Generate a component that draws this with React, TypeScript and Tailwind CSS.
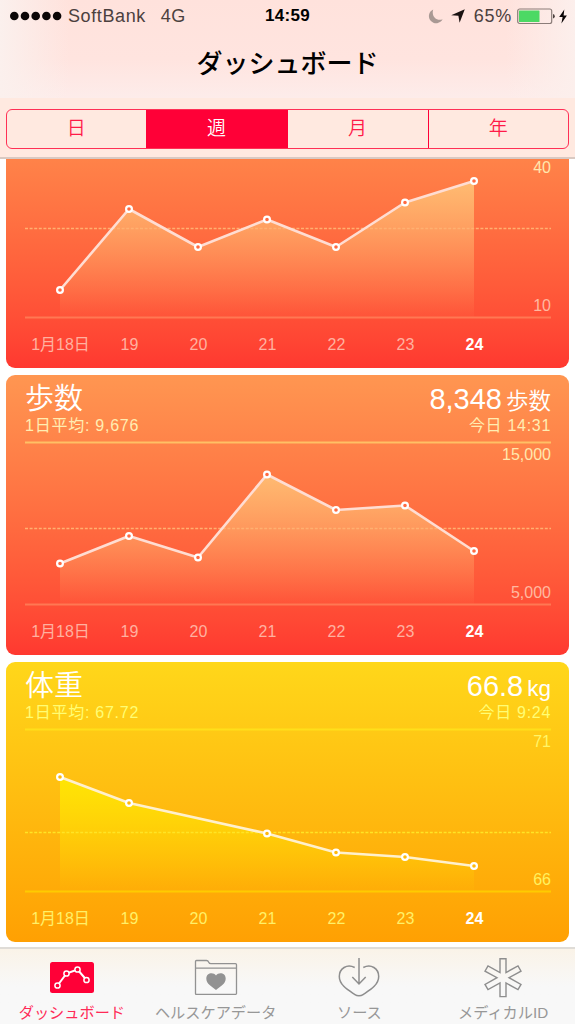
import React from 'react'

interface Point {
  day: number
  y: number
}

interface Metric {
  id: string
  title: string
  average: string
  value: string
  unit: string
  updated: string
  max: string
  min: string
  averageY: number
  points: Point[]
  theme: 'orange' | 'yellow'
}

const DAYS = ['1月18日', '19', '20', '21', '22', '23', '24']

const metrics: Metric[] = [
  {
    id: 'climbed',
    title: '',
    average: '',
    value: '',
    unit: '',
    updated: '',
    max: '40',
    min: '10',
    averageY: 74.5,
    theme: 'orange',
    points: [
      { day: 0, y: 136 },
      { day: 1, y: 55 },
      { day: 2, y: 93 },
      { day: 3, y: 65.5 },
      { day: 4, y: 93 },
      { day: 5, y: 48.5 },
      { day: 6, y: 27 }
    ]
  },
  {
    id: 'steps',
    title: '歩数',
    average: '1日平均: 9,676',
    value: '8,348',
    unit: '歩数',
    updated: '今日 14:31',
    max: '15,000',
    min: '5,000',
    averageY: 87.5,
    theme: 'orange',
    points: [
      { day: 0, y: 122.5 },
      { day: 1, y: 95 },
      { day: 2, y: 116.5 },
      { day: 3, y: 33.5 },
      { day: 4, y: 69 },
      { day: 5, y: 64.5 },
      { day: 6, y: 110 }
    ]
  },
  {
    id: 'weight',
    title: '体重',
    average: '1日平均: 67.72',
    value: '66.8',
    unit: 'kg',
    updated: '今日 9:24',
    max: '71',
    min: '66',
    averageY: 104.5,
    theme: 'yellow',
    points: [
      { day: 0, y: 49 },
      { day: 1, y: 75 },
      { day: 3, y: 105.5 },
      { day: 4, y: 124.5 },
      { day: 5, y: 129 },
      { day: 6, y: 138 }
    ]
  }
]

const themes = {
  orange: {
    card: 'bg-linear-to-b from-[#ff9651] to-[#ff3830]',
    sub: 'text-[#ffedb2]',
    max: 'text-[#ffe7ae]',
    min: 'text-[#ffb9a0]',
    day: 'text-[#ffb1a0]',
    topLine: '#ffc065',
    bottomLine: '#ff7853',
    dash: '#ffb070',
    fill: '#ffd080',
    stroke: '#ffddd2',
    dot: '#ff6a42'
  },
  yellow: {
    card: 'bg-linear-to-b from-[#ffd71a] to-[#ffa003]',
    sub: 'text-[#fffd74]',
    max: 'text-[#fff568]',
    min: 'text-[#fff160]',
    day: 'text-[#fff068]',
    topLine: '#ffdf1a',
    bottomLine: '#ffcb00',
    dash: '#ffe425',
    fill: '#fff200',
    stroke: '#fff0cc',
    dot: '#ffb90c'
  }
}

const dayX = (day: number) => 35 + day * 69

const MetricChart: React.FC<{ metric: Metric }> = ({ metric }) => {
  const theme = themes[metric.theme]
  const line = metric.points.map((p) => `${dayX(p.day)},${p.y}`).join(' ')
  const top = Math.min(...metric.points.map((p) => p.y))

  return (
    <svg width="526" height="165" viewBox="0 0 526 165" className="col-start-1 row-start-1">
      <defs>
        <linearGradient id={`area-${metric.id}`} gradientUnits="userSpaceOnUse" x1="0" y1={top} x2="0" y2="163">
          <stop offset="0" stopColor={theme.fill} stopOpacity="0.75" />
          <stop offset="1" stopColor={theme.fill} stopOpacity="0.03" />
        </linearGradient>
      </defs>
      <polygon points={`35,163 ${line} 449,163`} fill={`url(#area-${metric.id})`} />
      <path d="M0 1.5H526" stroke={theme.topLine} strokeWidth="2" />
      <path d="M0 163.5H526" stroke={theme.bottomLine} strokeWidth="2" />
      <path d={`M0 ${metric.averageY}H526`} stroke={theme.dash} strokeWidth="1.5" strokeDasharray="3 1.6" />
      <polyline points={line} fill="none" stroke={theme.stroke} strokeWidth="2.6" strokeLinejoin="round" />
      {metric.points.map((p) => (
        <circle key={p.day} cx={dayX(p.day)} cy={p.y} r="2.9" fill={theme.dot} stroke="#fff" strokeWidth="2.2" />
      ))}
    </svg>
  )
}

const MetricCard: React.FC<{ metric: Metric }> = ({ metric }) => {
  const theme = themes[metric.theme]

  return (
    <section className={`h-[280px] shrink-0 rounded-[9px] pl-[19px] pr-[18px] ${theme.card}`}>
      <div className="flex h-[66px] justify-between pt-[7px]">
        <div>
          <h2 className="h-[33px] text-[29px] leading-[34px] font-[350] text-white">{metric.title}</h2>
          <p className={`text-[16px] leading-[21px] tracking-[0.75px] ${theme.sub}`}>{metric.average}</p>
        </div>
        <div className="text-right">
          <p className="flex h-[33px] items-baseline justify-end gap-[4px] text-white">
            <span className="text-[29px] leading-[35px]">{metric.value}</span>
            <span className="text-[22.5px] leading-[35px] font-[350]">{metric.unit}</span>
          </p>
          <p className={`text-[16px] leading-[21px] tracking-[0.7px] ${theme.sub}`}>{metric.updated}</p>
        </div>
      </div>
      <div className="grid h-[165px]">
        <MetricChart metric={metric} />
        <div className="col-start-1 row-start-1 flex flex-col justify-between pt-[4px] pb-[3px] text-right text-[16px] leading-[20px]">
          <span className={theme.max}>{metric.max}</span>
          <span className={theme.min}>{metric.min}</span>
        </div>
      </div>
      <div className="flex pt-[16px] pl-[1px] text-center text-[16px] leading-[20px]">
        {DAYS.map((day, i) => (
          <span
            key={day}
            className={`w-[69px] shrink-0 whitespace-nowrap ${i === 6 ? 'font-bold text-white' : theme.day}`}
          >
            {day}
          </span>
        ))}
      </div>
    </section>
  )
}

const StatusBar: React.FC = () => (
  <div className="grid h-[32px] grid-cols-3 items-center text-[18px] leading-[22px] text-[#4b403e]">
    <div className="flex items-center pl-[10px]">
      <svg width="53" height="10" viewBox="0 0 53 10" fill="#0b0606">
        {[4.3, 15, 25.7, 36.4, 47.1].map((cx) => (
          <circle key={cx} cx={cx} cy="5" r="4.3" />
        ))}
      </svg>
      <span className="ml-[5px] tracking-[0.6px]">SoftBank</span>
      <span className="ml-[15px] tracking-[0.4px]">4G</span>
    </div>
    <span className="text-center text-[17px] font-bold tracking-[0.3px] text-black">14:59</span>
    <div className="flex items-center justify-end pr-[8px]">
      <svg width="15" height="15" viewBox="0 0 15 15" fill="#a99994">
        <path d="M5.2 0.5A7.2 7.2 0 1 0 14.6 10.2C9 12.6 3 7.5 5.2 0.5Z" />
      </svg>
      <svg width="14" height="14" viewBox="0 0 14 14" fill="#1a1211" className="ml-[8px]">
        <path d="M13.8 0.3L8.6 13.8L7.4 6.8L0.2 6.2Z" />
      </svg>
      <span className="ml-[9px] tracking-[0.7px]">65%</span>
      <svg width="38" height="17" viewBox="0 0 38 17" className="ml-[5px]">
        <rect x="0.7" y="1" width="34" height="14.5" rx="2" fill="none" stroke="#8b7d79" strokeWidth="1.2" />
        <rect x="2" y="2.5" width="20.5" height="11.5" rx="0.5" fill="#4cd964" />
        <path d="M36 6V10.5Q37.8 10 37.8 8.2Q37.8 6.5 36 6Z" fill="#4b403e" />
      </svg>
      <svg width="8" height="15" viewBox="0 0 8 15" fill="#0b0606" className="ml-[4px]">
        <path d="M5.3 0.5L0.2 8H3.6L2.4 14.5L7.9 6.4H4.6Z" />
      </svg>
    </div>
  </div>
)

const PERIODS = ['日', '週', '月', '年']

const tabs = [
  {
    label: 'ダッシュボード',
    icon: (
      <svg width="44" height="40" viewBox="0 0 44 40" fill="none">
        <rect x="0" y="4" width="44" height="31" rx="2.5" fill="#ff0037" />
        <path d="M7.5 27.5L16.5 15.5L27.5 11.5L36.5 22" stroke="#fff" strokeWidth="2" />
        {[[7.5, 27.5], [16.5, 15.5], [27.5, 11.5], [36.5, 22]].map(([cx, cy]) => (
          <circle key={cx} cx={cx} cy={cy} r="2.6" fill="#ff0037" stroke="#fff" strokeWidth="1.5" />
        ))}
      </svg>
    )
  },
  {
    label: 'ヘルスケアデータ',
    icon: (
      <svg width="44" height="40" viewBox="0 0 44 40" fill="none" stroke="#929292" strokeWidth="1.3">
        <path d="M1.5 35.6V3.5Q1.5 2.5 2.5 2.5H12.5Q14 2.5 14.7 4.2Q15.3 5.7 17 5.7H41.5Q42.5 5.7 42.5 6.7V35.6Q42.5 36.4 41.7 36.4H2.3Q1.5 36.4 1.5 35.6Z" />
        <path d="M1.5 10.2H42.5" />
        <path
          d="M22 32C18 28.5 12.3 25.8 12.3 20.7C12.3 14.5 19.5 13.8 22 17.5C24.5 13.8 31.7 14.5 31.7 20.7C31.7 25.8 26 28.5 22 32Z"
          fill="#929292"
          stroke="none"
        />
      </svg>
    )
  },
  {
    label: 'ソース',
    icon: (
      <svg width="44" height="40" viewBox="0 0 44 40" fill="none" stroke="#8e8e8e" strokeWidth="1.5">
        <path d="M17.7 9.5C10 5.5 2.3 10.5 2.3 18.5C2.3 27 11 32 17.5 36.3Q22 39.4 26.5 36.3C33 32 41.7 27 41.7 18.5C41.7 10.5 34 5.5 26.3 9.5" />
        <path d="M22 0V26M15.3 19L22 26L28.7 19" />
      </svg>
    )
  },
  {
    label: 'メディカルID',
    icon: (
      <svg width="44" height="40" viewBox="0 0 44 40" fill="none" stroke="#8e8e8e" strokeWidth="1.4">
        <path d="M19 0.7H25V14.5L37 8L40 13.2L28 19.7L40 26.4L37 31.6L25 25V38.6H19V25L7 31.6L4 26.4L16 19.7L4 13.2L7 8L19 14.5Z" />
      </svg>
    )
  }
]

export default function App() {
  return (
    <div className="h-[1024px] w-[576px] overflow-hidden bg-white pr-px font-['Liberation_Sans','Noto_Sans_CJK_JP',sans-serif]">
      <header className="h-[159px] border-b-2 border-[#d9c9c2] bg-[#ffe9e0]">
        <div className="h-[98px] bg-[linear-gradient(90deg,#fbf0ed_0%,#fbf0ed00_12%,#fbf0ed00_88%,#fcefec_100%),linear-gradient(180deg,#ffe2dc_0%,#ffe4df_60%,#fdecea_100%)]">
          <StatusBar />
          <h1 className="pt-[15px] text-center text-[26px] leading-[34px] font-medium text-black">ダッシュボード</h1>
        </div>
        <div className="px-[6px] pt-[11px]">
          <div className="grid h-[40px] grid-cols-[138.5px_142px_140px_1fr] overflow-hidden rounded-[6px] border-[1.5px] border-[#ff3055]">
            {PERIODS.map((period, i) => (
              <button
                key={period}
                className={`text-[19px] leading-[36px] font-[350] ${
                  i === 1 ? 'bg-[#ff0037] text-white' : 'text-[#ff1a48]'
                } ${i === 3 ? 'border-l-[1.5px] border-[#ff0037]' : ''}`}
              >
                {period}
              </button>
            ))}
          </div>
        </div>
      </header>

      <main className="h-[788px] overflow-hidden px-[6px]">
        <div className="-mt-[71px] flex flex-col gap-[7px]">
          {metrics.map((metric) => (
            <MetricCard key={metric.id} metric={metric} />
          ))}
        </div>
      </main>

      <nav className="grid h-[77px] grid-cols-4 border-t-2 border-[#dfdcd7] bg-linear-to-b from-[#faf3e8] to-[#f8f8f8] to-50%">
        {tabs.map((tab, i) => (
          <div
            key={tab.label}
            className={`flex flex-col items-center pt-[9px] text-[15.2px] leading-[20px] whitespace-nowrap ${
              i === 0 ? 'text-[#ff2a57]' : 'text-[#979797]'
            }`}
          >
            {tab.icon}
            <span className="mt-[5px]">{tab.label}</span>
          </div>
        ))}
      </nav>
    </div>
  )
}
